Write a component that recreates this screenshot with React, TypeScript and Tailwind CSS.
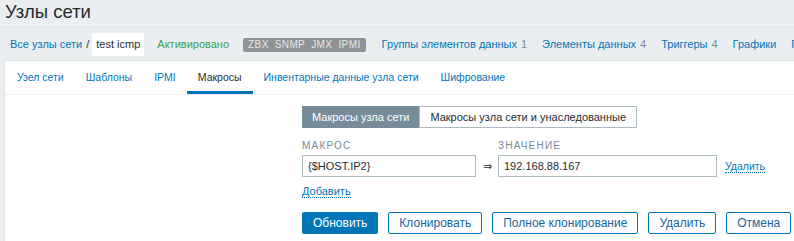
import React from "react";

const tabs = [
  "Узел сети",
  "Шаблоны",
  "IPMI",
  "Макросы",
  "Инвентарные данные узла сети",
  "Шифрование",
];

const nav = [
  { label: "Группы элементов данных", count: "1" },
  { label: "Элементы данных", count: "4" },
  { label: "Триггеры", count: "4" },
  { label: "Графики" },
  { label: "Панели" },
];

export default function App() {
  return (
    <div className="h-[241px] w-[794px] overflow-hidden bg-[#ebeef0] font-['Liberation_Sans',Arial,sans-serif] text-[12px] text-[#1f2c33]">
      {/* Header */}
      <div className="h-[25px] border-b border-[#f4f6f7] pl-[5px]">
        <h1 className="text-[18.5px] leading-[24px]">Узлы сети</h1>
      </div>

      {/* Breadcrumbs / host nav */}
      <div className="mt-[8px] flex h-[23px] items-center whitespace-nowrap pl-[10px] text-[11px]">
        <a className="text-[#0275b8]">Все узлы сети</a>
        <span className="ml-[4px] text-[#1f2c33]">/</span>
        <span className="ml-[3px] flex h-[23px] items-center bg-white px-[4px]">test icmp</span>
        <span className="ml-[13px] text-[#429e47]">Активировано</span>
        <span className="ml-[14px] flex h-[14px] items-center gap-[6px] rounded-[2px] bg-[#8f9395] px-[5px] text-[10px] tracking-[0.4px] text-[#e4e7e9]">
          <span>ZBX</span>
          <span>SNMP</span>
          <span>JMX</span>
          <span>IPMI</span>
        </span>
        <div className="ml-[16px] flex gap-[15px]">
          {nav.map((n) => (
            <span key={n.label}>
              <a className="text-[#0275b8]">{n.label}</a>
              {n.count && <span className="ml-[4px] text-[#768d99]">{n.count}</span>}
            </span>
          ))}
        </div>
      </div>

      {/* Main panel */}
      <div className="ml-[4px] mt-[4px] h-[200px] border-l border-t border-[#dfe4e7] bg-white">
        <div className="flex h-[34px] whitespace-nowrap border-b border-[#ebeef0] pl-[1px] text-[10.5px]">
          {tabs.map((t) => {
            const active = t === "Макросы";
            return (
              <div
                key={t}
                className={
                  active
                    ? "flex items-center border-b-[3px] border-[#0275b8] px-[11px] pt-[3px] text-[#1f2c33]"
                    : "flex items-center px-[11px] text-[#0275b8]"
                }
              >
                {t}
              </div>
            );
          })}
        </div>

        <div className="pl-[297px] pt-[11px]">
          {/* Segmented control */}
          <div className="flex h-[22px] text-[11px]">
            <div className="flex items-center bg-[#768d99] px-[10px] text-white">Макросы узла сети</div>
            <div className="flex items-center border border-[#acbbc2] px-[10px]">
              Макросы узла сети и унаследованные
            </div>
          </div>

          {/* Labels */}
          <div className="mt-[10px] flex text-[10px] uppercase tracking-[1.2px] text-[#768d99]">
            <span className="w-[196px]">Макрос</span>
            <span>Значение</span>
          </div>

          {/* Macro row */}
          <div className="mt-[2px] flex items-center text-[11px]">
            <div className="flex h-[22px] w-[174px] items-center border border-[#acbbc2] px-[5px]">{"{$HOST.IP2}"}</div>
            <span className="ml-[7px] w-[15px] text-[11px]">⇒</span>
            <div className="flex h-[22px] w-[219px] items-center border border-[#acbbc2] px-[5px]">192.168.88.167</div>
            <a className="ml-[8px] border-b border-dotted border-[#0275b8] text-[10.5px] leading-[12px] text-[#0275b8]">
              Удалить
            </a>
          </div>

          <div className="mt-[6px] text-[11px]">
            <a className="border-b border-dotted border-[#0275b8] leading-[12px] text-[#0275b8]">Добавить</a>
          </div>

          {/* Buttons */}
          <div className="mt-[12px] flex gap-[10px]">
            <button className="h-[22px] rounded-[2px] bg-[#0275b8] px-[11px] text-white">Обновить</button>
            {["Клонировать", "Полное клонирование", "Удалить", "Отмена"].map((b) => (
              <button
                key={b}
                className="h-[22px] rounded-[2px] border border-[#0275b8] bg-white px-[10px] text-[#1467a0]"
              >
                {b}
              </button>
            ))}
          </div>
        </div>
      </div>
    </div>
  );
}
